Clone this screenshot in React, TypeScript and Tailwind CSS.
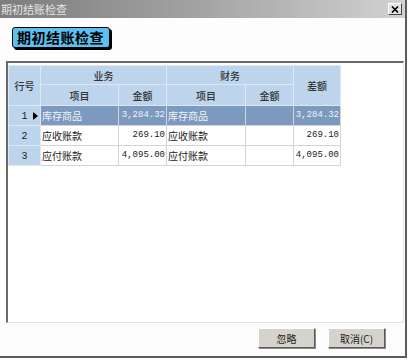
import React from 'react';

interface Row {
  no: number;
  bizItem: string;
  bizAmt: string;
  finItem: string;
  finAmt: string;
  diff: string;
}

const rows: Row[] = [
  { no: 1, bizItem: '库存商品', bizAmt: '3,284.32', finItem: '库存商品', finAmt: '', diff: '3,284.32' },
  { no: 2, bizItem: '应收账款', bizAmt: '269.10', finItem: '应收账款', finAmt: '', diff: '269.10' },
  { no: 3, bizItem: '应付账款', bizAmt: '4,095.00', finItem: '应付账款', finAmt: '', diff: '4,095.00' },
];

const cjk = '[font-family:"Noto_Sans_CJK_SC",sans-serif]';
const mono = '[font-family:"Liberation_Mono","Noto_Sans_CJK_SC",monospace]';

function WinButton({ label }: { label: string }) {
  return (
    <button
      className={`w-[57px] h-[20px] bg-[#d6d3cc] text-[10px] text-[#222] ${cjk} border border-t-white border-l-white border-r-[#5a5a5a] border-b-[#5a5a5a] shadow-[1px_1px_0_#8a8a8a]`}
    >
      {label}
    </button>
  );
}

export default function App() {
  const th = 'border border-[#dfe8f2] bg-[#bcd5ec] text-[10px] font-medium text-[#333] p-0';
  return (
    <div className={`w-[412px] h-[360px] bg-white ${cjk}`}>
      <div className="w-[407px] h-[358px] flex flex-col border-r-2 border-b-2 border-[#5c5c5c] bg-[#fdfdfd]">
        {/* Title bar */}
        <div className="h-[18px] flex items-center justify-between bg-gradient-to-r from-[#7d7d7d] via-[#a4a4a4] to-[#d2d2d2] pl-[1px] pr-[3px]">
          <span className="text-[11px] text-[#e6e6e6] leading-none">期初结账检查</span>
          <div className="w-[14px] h-[12px] flex items-center justify-center bg-[#e2e2e2] border border-t-white border-l-white border-r-[#444] border-b-[#444]">
            <svg width="8" height="7" viewBox="0 0 8 7">
              <path d="M1 0.5 L7 6.5 M7 0.5 L1 6.5" stroke="#000" strokeWidth="1.6" />
            </svg>
          </div>
        </div>

        {/* Header label */}
        <div className="pl-[12px] pt-[6px] h-[43px]">
          <div className="inline-flex items-center h-[21px] w-[98px] pl-[4px] bg-[#5cc0f0] border-[1.5px] border-black rounded-[3px] shadow-[2px_2px_0_#000]">
            <span className="text-[14px] font-bold text-black tracking-[0.5px] leading-none">期初结账检查</span>
          </div>
        </div>

        {/* Grid panel */}
        <div className="ml-[6px] mr-[1px] h-[262px] border-t-2 border-l-2 border-[#6a6a6a] border-r border-b border-r-[#e4e4e4] border-b-[#e4e4e4] bg-white pt-[2px]">
          <table className="border-collapse table-fixed text-[10px] text-[#222]">
            <colgroup>
              <col className="w-[32px]" />
              <col className="w-[78px]" />
              <col className="w-[48px]" />
              <col className="w-[79px]" />
              <col className="w-[48px]" />
              <col className="w-[47px]" />
            </colgroup>
            <thead>
              <tr className="h-[19px]">
                <th rowSpan={2} className={th}>行号</th>
                <th colSpan={2} className={th}>业务</th>
                <th colSpan={2} className={th}>财务</th>
                <th rowSpan={2} className={th}>差额</th>
              </tr>
              <tr className="h-[21px]">
                <th className={th}>项目</th>
                <th className={th}>金额</th>
                <th className={th}>项目</th>
                <th className={th}>金额</th>
              </tr>
            </thead>
            <tbody>
              {rows.map((r) => {
                const sel = r.no === 1;
                const cell = `border border-[#d4d4d4] p-0 h-[20px] ${sel ? 'bg-[#7c99bf] text-[#f2f4f8]' : 'bg-white'}`;
                return (
                  <tr key={r.no}>
                    <td className="border border-[#dfe8f2] bg-[#bcd5ec] p-0 text-center relative">
                      <span className={`text-[10px] text-[#222] ${mono}`}>{r.no}</span>
                      {sel && (
                        <svg className="absolute right-[2px] top-[6px]" width="5" height="8" viewBox="0 0 5 8">
                          <path d="M0 0 L5 4 L0 8 Z" fill="#000" />
                        </svg>
                      )}
                    </td>
                    <td className={`${cell} pl-[1px]`}>{r.bizItem}</td>
                    <td className={`${cell} text-right ${mono} text-[9px] pr-[1px]`}>{r.bizAmt}</td>
                    <td className={`${cell} pl-[1px]`}>{r.finItem}</td>
                    <td className={`${cell} text-right ${mono} text-[9px]`}>{r.finAmt}</td>
                    <td className={`${cell} text-right ${mono} text-[9px] pr-[1px]`}>{r.diff}</td>
                  </tr>
                );
              })}
            </tbody>
          </table>
        </div>

        {/* Buttons */}
        <div className="flex justify-end gap-[13px] pr-[20px] pt-[5px]">
          <WinButton label="忽略" />
          <WinButton label="取消(C)" />
        </div>
      </div>
    </div>
  );
}
